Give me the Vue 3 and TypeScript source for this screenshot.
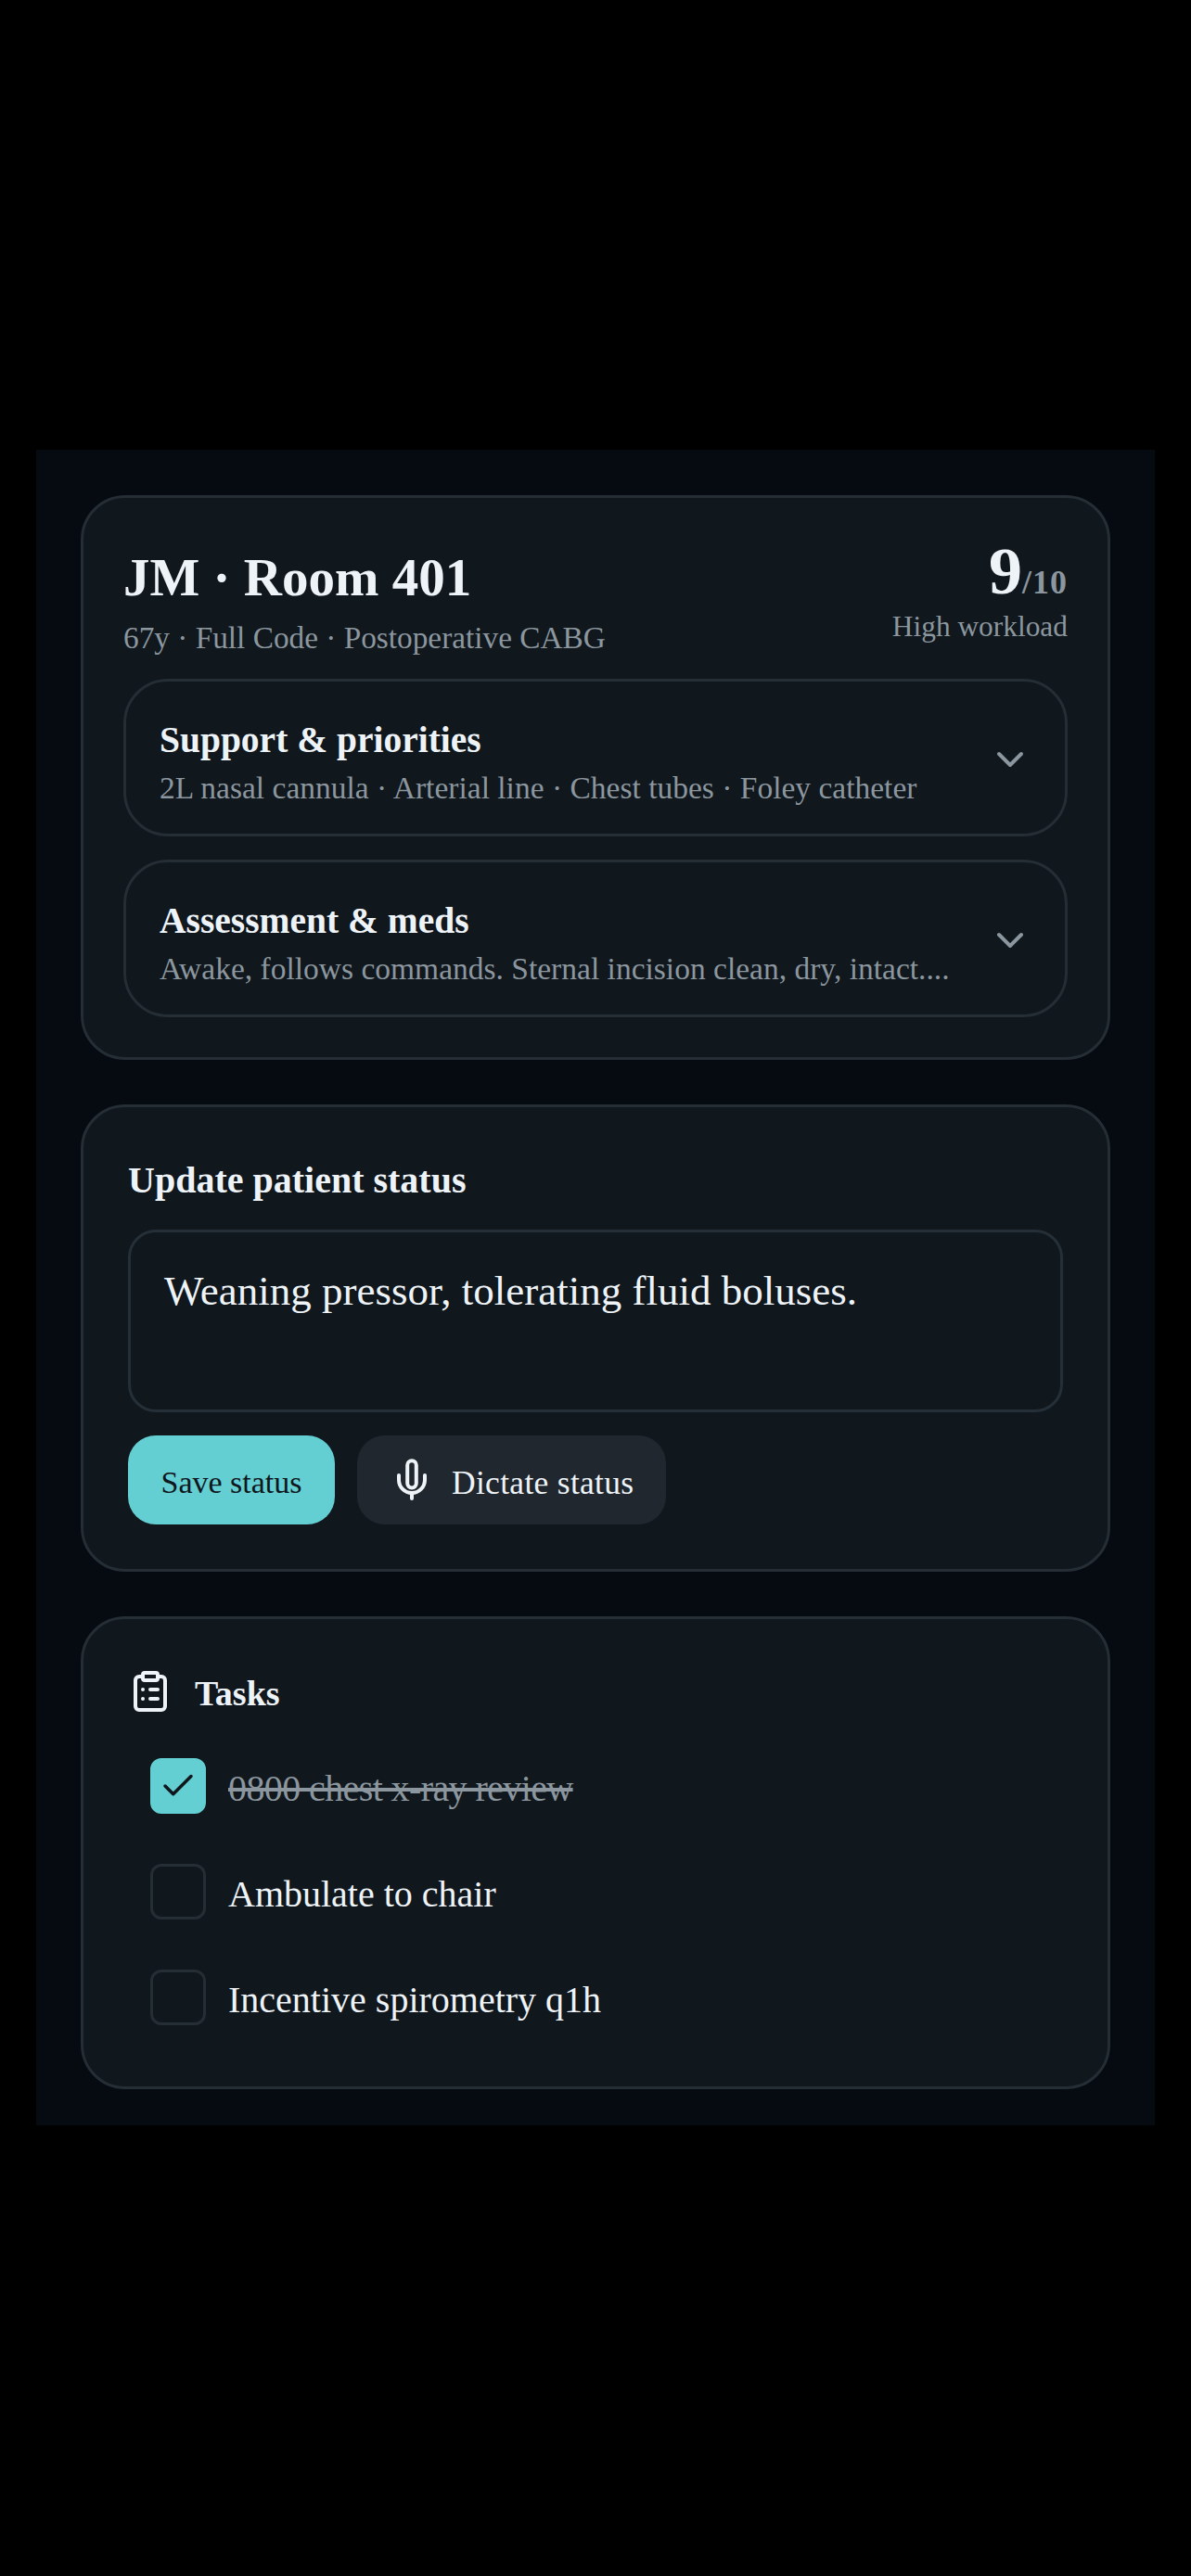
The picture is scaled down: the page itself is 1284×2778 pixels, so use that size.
<script setup lang="ts">
import { ref } from 'vue'

interface Section { title: string; body: string }
interface Task { label: string; done: boolean }

const sections: Section[] = [
  { title: 'Support & priorities', body: '2L nasal cannula · Arterial line · Chest tubes · Foley catheter' },
  { title: 'Assessment & meds', body: 'Awake, follows commands. Sternal incision clean, dry, intact....' },
]
const status = ref('Weaning pressor, tolerating fluid boluses.')
const tasks: Task[] = [
  { label: '0800 chest x-ray review', done: true },
  { label: 'Ambulate to chair', done: false },
  { label: 'Incentive spirometry q1h', done: false },
]
</script>

<template>
  <div class="page">
    <main class="frame">
      <section class="card head-card">
        <header class="head">
          <div>
            <h1 class="title">JM · Room 401</h1>
            <p class="sub">67y · Full Code · Postoperative CABG</p>
          </div>
          <div class="score">
            <div class="score-line"><span class="score-num">9</span><span class="score-of">/10</span></div>
            <div class="score-label">High workload</div>
          </div>
        </header>
        <div class="sections">
          <div v-for="s in sections" :key="s.title" class="section">
            <div class="section-text">
              <div class="section-title">{{ s.title }}</div>
              <div class="section-body">{{ s.body }}</div>
            </div>
            <svg class="chev" viewBox="0 0 24 24"><path d="m6 9 6 6 6-6" /></svg>
          </div>
        </div>
      </section>

      <section class="card status-card">
        <h2 class="status-title">Update patient status</h2>
        <div class="input">{{ status }}</div>
        <div class="actions">
          <button class="btn save"><span class="btn-text">Save status</span></button>
          <button class="btn dictate">
            <svg class="mic" viewBox="0 0 24 24">
              <rect x="9.6" y="1.6" width="4.8" height="14.6" rx="2.4" />
              <path d="M19 9.5V12a7 7 0 0 1-14 0V9.5" />
              <path d="M12 19v3" />
            </svg>
            <span class="btn-text">Dictate status</span>
          </button>
        </div>
      </section>

      <section class="card tasks-card">
        <div class="tasks-head">
          <svg class="clip" viewBox="0 0 24 24">
            <rect x="8" y="2" width="8" height="4" rx="1" />
            <path d="M16 4h2a2 2 0 0 1 2 2v14a2 2 0 0 1-2 2H6a2 2 0 0 1-2-2V6a2 2 0 0 1 2-2h2" />
            <path d="M12 11h4M12 16h4M8 11h.01M8 16h.01" />
          </svg>
          <h2 class="tasks-title">Tasks</h2>
        </div>
        <ul class="tasks">
          <li v-for="t in tasks" :key="t.label" class="task">
            <span class="box" :class="{ on: t.done }">
              <svg v-if="t.done" class="check" viewBox="0 0 24 24"><path d="M20 6 9 17l-5-5" /></svg>
            </span>
            <span class="task-label" :class="{ done: t.done }">{{ t.label }}</span>
          </li>
        </ul>
      </section>
    </main>
  </div>
</template>

<style>
html, body { margin: 0; background: #000; }
</style>

<style scoped>
.page {
  min-height: 2778px;
  box-sizing: border-box;
  padding: 485px 39px 0;
  font-family: "Liberation Serif", serif;
  color: #eef3f8;
}
.frame {
  background: #060b11;
  height: 1807px;
  box-sizing: border-box;
  padding: 49px 48px 0;
  display: flex;
  flex-direction: column;
  gap: 48px;
}
.card {
  background: #10171d;
  border: 3px solid #252d35;
  border-radius: 48px;
  box-sizing: border-box;
}
.head-card { height: 609px; padding: 42px 43px 0; }
.head { display: flex; justify-content: space-between; align-items: flex-start; height: 153px; }
.title { margin: 6px 0 0; font-size: 57px; line-height: 76px; font-weight: 700; }
.sub { margin: 2px 0 0; font-size: 33.3px; line-height: 50px; color: #8b969e; }
.score { text-align: right; padding-top: 1px; }
.score-line { font-size: 72px; line-height: 72px; height: 72px; }
.score-num { font-weight: 700; }
.score-of { font-size: 36px; font-weight: 700; letter-spacing: 1px; color: #8b969e; }
.score-label { margin-top: 2.4px; font-size: 31.4px; line-height: 44px; color: #8b969e; }
.sections { display: flex; flex-direction: column; gap: 25px; }
.section {
  height: 170px;
  box-sizing: border-box;
  border: 3px solid #252d35;
  border-radius: 48px;
  padding: 0 35px 0 36px;
  display: flex;
  align-items: center;
  justify-content: space-between;
}
.section-text { padding-top: 8px; }
.section-title { font-size: 39.5px; line-height: 58px; font-weight: 700; }
.section-body { font-size: 33.5px; line-height: 46px; color: #8b969e; white-space: nowrap; }
.chev { margin-top: 4px; width: 48px; height: 48px; fill: none; stroke: #8b969e; stroke-width: 2; stroke-linecap: round; stroke-linejoin: round; }
.status-card { height: 504px; padding: 46px 48px 0; }
.status-title { margin: 0; font-size: 40px; line-height: 66px; font-weight: 700; }
.input {
  margin-top: 20px;
  height: 197px;
  box-sizing: border-box;
  border: 3px solid #252f37;
  border-radius: 30px;
  padding: 32px 36px;
  font-size: 45px;
  line-height: 62px;
}
.actions { display: flex; gap: 24px; margin-top: 25px; }
.btn {
  height: 96px;
  border: 0;
  border-radius: 30px;
  font-family: inherit;
  display: flex;
  align-items: center;
  padding: 0;
}
.btn-text { padding-top: 6px; }
.save { width: 223px; justify-content: center; font-size: 34px; background: #63cfd2; color: #0f161c; }
.dictate { width: 333px; padding-left: 35px; gap: 19px; font-size: 35.5px; letter-spacing: 0.3px; background: #20272e; color: #eef3f8; }
.mic, .clip { width: 48px; height: 48px; flex: none; fill: none; stroke: #eef3f8; stroke-width: 2; stroke-linecap: round; stroke-linejoin: round; }
.tasks-card { height: 510px; padding: 54px 0 0 48px; }
.tasks-head { display: flex; align-items: center; gap: 24px; height: 48px; }
.tasks-title { margin: 4px 0 0; font-size: 38px; font-weight: 700; }
.tasks { list-style: none; margin: 48px 0 0; padding: 0 0 0 24px; display: flex; flex-direction: column; gap: 54px; }
.task { display: flex; align-items: center; gap: 24px; height: 60px; }
.box {
  width: 60px; height: 60px; box-sizing: border-box;
  border: 3px solid #252d35;
  border-radius: 12px;
  display: flex; align-items: center; justify-content: center;
}
.box.on { background: #63cfd2; border-color: #63cfd2; }
.check { width: 42px; height: 42px; fill: none; stroke: #0f161c; stroke-width: 2; stroke-linecap: round; stroke-linejoin: round; }
.task-label { font-size: 40px; padding-top: 4px; }
.task-label.done { color: #8b969e; text-decoration: line-through; letter-spacing: -0.6px; }
</style>
